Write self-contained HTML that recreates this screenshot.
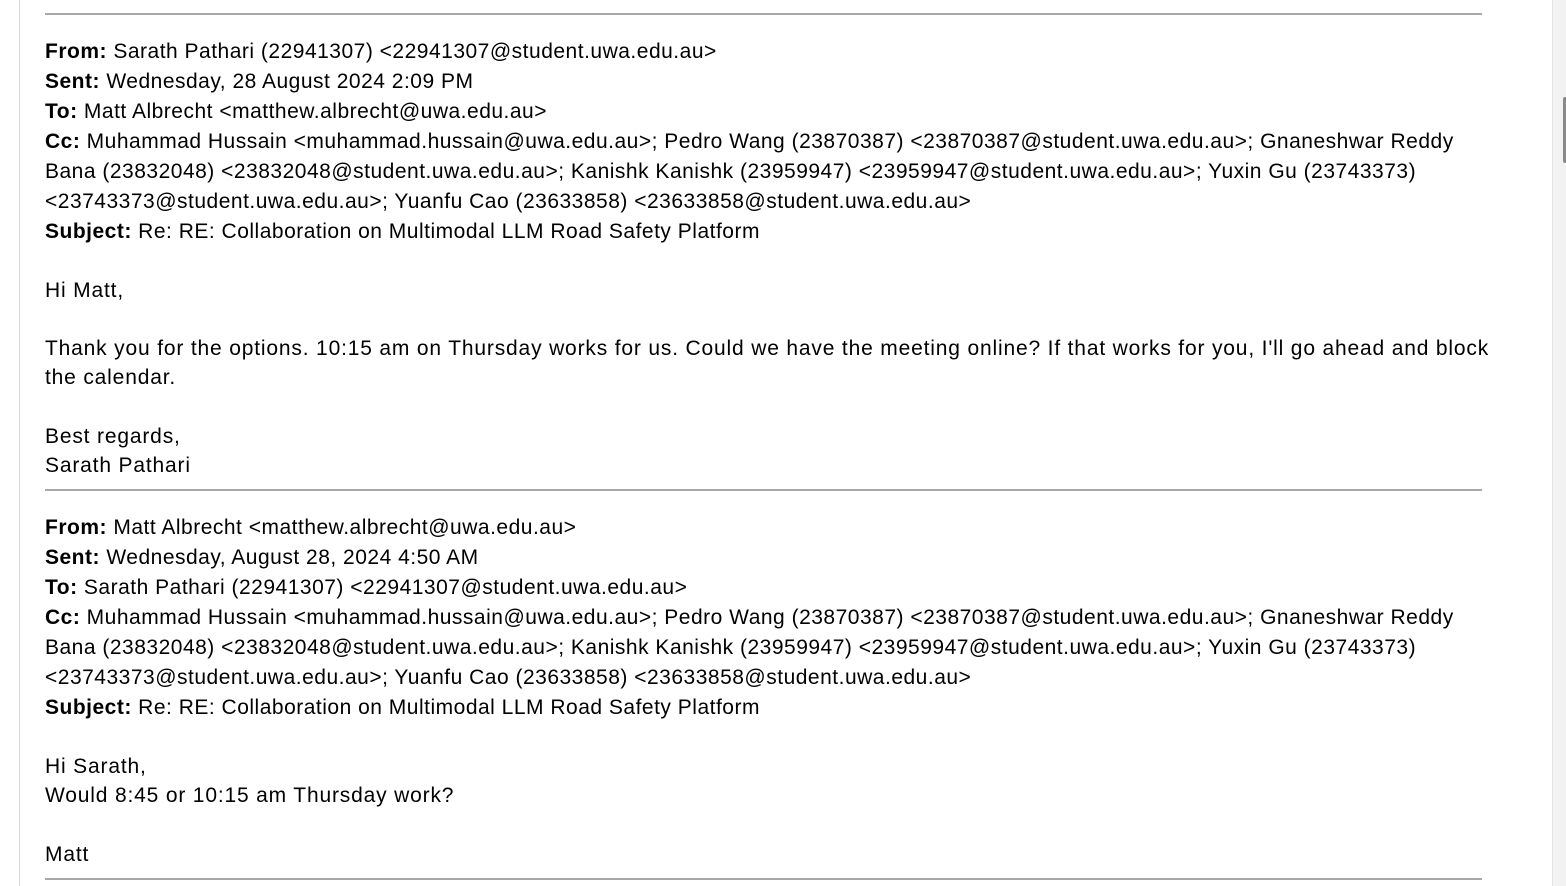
<!DOCTYPE html>
<html><head><meta charset="utf-8"><style>
html,body{margin:0;padding:0;width:1566px;height:886px;overflow:hidden;background:#fff;}
body{position:relative;font-family:"Liberation Sans",Arial,sans-serif;color:#000;}
.l{position:absolute;left:45px;white-space:nowrap;font-size:21px;line-height:30px;letter-spacing:0.5px;}
.b{font-size:21px;letter-spacing:0.83px;}
.hr{position:absolute;left:45px;width:1437px;height:2px;background:#a8a8a8;}
.vl{position:absolute;left:19px;top:0;width:1px;height:886px;background:#d8d8d8;}
.sb{position:absolute;left:1552px;top:0;width:14px;height:886px;background:#f2f2f2;border-left:1px solid #e3e3e3;}
.th{position:absolute;left:1563px;top:97px;width:4px;height:66px;background:#8a8a8a;border-radius:2px;}
</style></head><body>
<div class="vl"></div>
<div class="sb"></div><div class="th"></div>
<div class="hr" style="top:13px"></div>
<div class="l" style="top:37px"><b>From:</b> Sarath Pathari (22941307) &lt;22941307@student.uwa.edu.au&gt;</div>
<div class="l" style="top:67px"><b>Sent:</b> Wednesday, 28 August 2024 2:09 PM</div>
<div class="l" style="top:97px"><b>To:</b> Matt Albrecht &lt;matthew.albrecht@uwa.edu.au&gt;</div>
<div class="l" style="top:127px"><b>Cc:</b> Muhammad Hussain &lt;muhammad.hussain@uwa.edu.au&gt;; Pedro Wang (23870387) &lt;23870387@student.uwa.edu.au&gt;; Gnaneshwar Reddy</div>
<div class="l" style="top:157px">Bana (23832048) &lt;23832048@student.uwa.edu.au&gt;; Kanishk Kanishk (23959947) &lt;23959947@student.uwa.edu.au&gt;; Yuxin Gu (23743373)</div>
<div class="l" style="top:187px">&lt;23743373@student.uwa.edu.au&gt;; Yuanfu Cao (23633858) &lt;23633858@student.uwa.edu.au&gt;</div>
<div class="l" style="top:217px"><b>Subject:</b> Re: RE: Collaboration on Multimodal LLM Road Safety Platform</div>
<div class="l b" style="top:276px">Hi Matt,</div>
<div class="l b" style="top:334px">Thank you for the options. 10:15 am on Thursday works for us. Could we have the meeting online? If that works for you, I'll go ahead and block</div>
<div class="l b" style="top:363px">the calendar.</div>
<div class="l b" style="top:422px">Best regards,</div>
<div class="l b" style="top:451px">Sarath Pathari</div>
<div class="hr" style="top:489px"></div>
<div class="l" style="top:513px"><b>From:</b> Matt Albrecht &lt;matthew.albrecht@uwa.edu.au&gt;</div>
<div class="l" style="top:543px"><b>Sent:</b> Wednesday, August 28, 2024 4:50 AM</div>
<div class="l" style="top:573px"><b>To:</b> Sarath Pathari (22941307) &lt;22941307@student.uwa.edu.au&gt;</div>
<div class="l" style="top:603px"><b>Cc:</b> Muhammad Hussain &lt;muhammad.hussain@uwa.edu.au&gt;; Pedro Wang (23870387) &lt;23870387@student.uwa.edu.au&gt;; Gnaneshwar Reddy</div>
<div class="l" style="top:633px">Bana (23832048) &lt;23832048@student.uwa.edu.au&gt;; Kanishk Kanishk (23959947) &lt;23959947@student.uwa.edu.au&gt;; Yuxin Gu (23743373)</div>
<div class="l" style="top:663px">&lt;23743373@student.uwa.edu.au&gt;; Yuanfu Cao (23633858) &lt;23633858@student.uwa.edu.au&gt;</div>
<div class="l" style="top:693px"><b>Subject:</b> Re: RE: Collaboration on Multimodal LLM Road Safety Platform</div>
<div class="l b" style="top:752px">Hi Sarath,</div>
<div class="l b" style="top:781px">Would 8:45 or 10:15 am Thursday work?</div>
<div class="l b" style="top:840px">Matt</div>
<div class="hr" style="top:878px"></div>
</body></html>
